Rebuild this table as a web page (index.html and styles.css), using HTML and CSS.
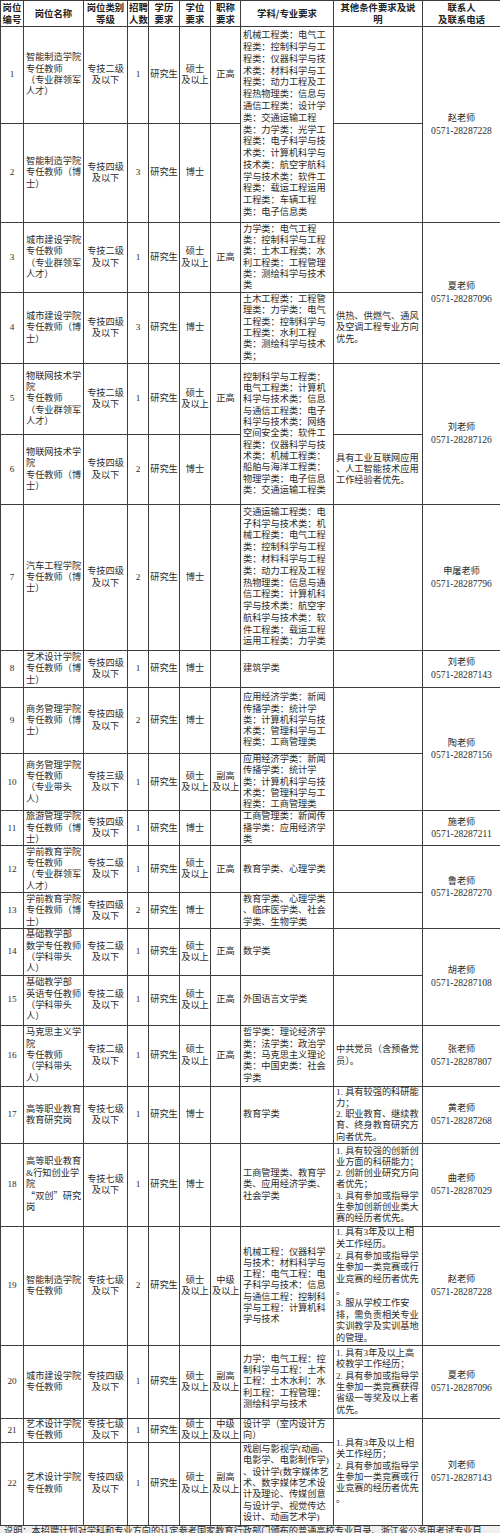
FILE: index.html
```html
<!DOCTYPE html>
<html lang="zh-CN">
<head>
<meta charset="utf-8">
<title>招聘计划</title>
<link rel="stylesheet" href="styles.css">
</head>
<body>
<table class="plan">
<colgroup>
<col class="w-no"><col class="w-name"><col class="w-type"><col class="w-cnt"><col class="w-edu"><col class="w-deg"><col class="w-title"><col class="w-subj"><col class="w-other"><col class="w-contact">
</colgroup>
<thead>
<tr class="rh">
<th>岗位<br>编号</th><th>岗位名称</th><th>岗位类别<br>等级</th><th>招聘<br>人数</th><th>学历<br>要求</th><th>学位<br>要求</th><th>职称<br>要求</th><th>学科/专业要求</th><th>其他条件要求及说<br>明</th><th>联系人<br>及联系电话</th>
</tr>
</thead>
<tbody>
<tr class="r1">
<td class="c">1</td><td class="l">智能制造学院<br>专任教师<br>（专业群领军<br>人才）</td><td class="c">专技二级<br>及以下</td><td class="c">1</td><td class="c">研究生</td><td class="c">硕士<br>及以上</td><td class="c">正高</td>
<td class="l tall" rowspan="2">机械工程类：电气工<br>程类：控制科学与工<br>程类：仪器科学与技<br>术类：材料科学与工<br>程类：动力工程及工<br>程热物理类：信息与<br>通信工程类：设计学<br>类：交通运输工程<br>类：力学类：光学工<br>程类：电子科学与技<br>术类：计算机科学与<br>技术类：航空宇航科<br>学与技术类：软件工<br>程类：载运工程运用<br>工程类：车辆工程<br>类：电子信息类</td>
<td class="l"></td>
<td class="c contact" rowspan="2">赵老师<br><span class="tel">0571-28287228</span></td>
</tr>
<tr class="r2">
<td class="c">2</td><td class="l">智能制造学院<br>专任教师（博<br>士）</td><td class="c">专技四级<br>及以下</td><td class="c">3</td><td class="c">研究生</td><td class="c">博士</td><td class="c"></td>
<td class="l"></td>
</tr>
<tr class="r3">
<td class="c">3</td><td class="l">城市建设学院<br>专任教师<br>（专业群领军<br>人才）</td><td class="c">专技二级<br>及以下</td><td class="c">1</td><td class="c">研究生</td><td class="c">硕士<br>及以上</td><td class="c">正高</td>
<td class="l">力学类：电气工程<br>类：控制科学与工程<br>类：土木工程类：水<br>利工程类：工程管理<br>类：测绘科学与技术<br>类</td>
<td class="l"></td>
<td class="c contact" rowspan="2">夏老师<br><span class="tel">0571-28287096</span></td>
</tr>
<tr class="r4">
<td class="c">4</td><td class="l">城市建设学院<br>专任教师（博<br>士）</td><td class="c">专技四级<br>及以下</td><td class="c">3</td><td class="c">研究生</td><td class="c">博士</td><td class="c"></td>
<td class="l">土木工程类：工程管<br>理类：力学类：电气<br>工程类：控制科学与<br>工程类：水利工程<br>类：测绘科学与技术<br>类；</td>
<td class="l">供热、供燃气、通风<br>及空调工程专业方向<br>优先。</td>
</tr>
<tr class="r5">
<td class="c">5</td><td class="l">物联网技术学<br>院<br>专任教师<br>（专业群领军<br>人才）</td><td class="c">专技二级<br>及以下</td><td class="c">1</td><td class="c">研究生</td><td class="c">硕士<br>及以上</td><td class="c">正高</td>
<td class="l" rowspan="2">控制科学与工程类：<br>电气工程类：计算机<br>科学与技术类：信息<br>与通信工程类：电子<br>科学与技术类：网络<br>空间安全类：软件工<br>程类：仪器科学与技<br>术类：机械工程类：<br>船舶与海洋工程类：<br>物理学类：电子信息<br>类：交通运输工程类</td>
<td class="l"></td>
<td class="c contact" rowspan="2">刘老师<br><span class="tel">0571-28287126</span></td>
</tr>
<tr class="r6">
<td class="c">6</td><td class="l">物联网技术学<br>院<br>专任教师（博<br>士）</td><td class="c">专技四级<br>及以下</td><td class="c">2</td><td class="c">研究生</td><td class="c">博士</td><td class="c"></td>
<td class="l">具有工业互联网应用<br>、人工智能技术应用<br>工作经验者优先。</td>
</tr>
<tr class="r7">
<td class="c">7</td><td class="l">汽车工程学院<br>专任教师（博<br>士）</td><td class="c">专技四级<br>及以下</td><td class="c">2</td><td class="c">研究生</td><td class="c">博士</td><td class="c"></td>
<td class="l tall">交通运输工程类：电<br>子科学与技术类：机<br>械工程类：电气工程<br>类：控制科学与工程<br>类：材料科学与工程<br>类：动力工程及工程<br>热物理类：信息与通<br>信工程类：计算机科<br>学与技术类：航空宇<br>航科学与技术类：软<br>件工程类：载运工程<br>运用工程类：力学类</td>
<td class="l"></td>
<td class="c contact">申屠老师<br><span class="tel">0571-28287796</span></td>
</tr>
<tr class="r8">
<td class="c">8</td><td class="l">艺术设计学院<br>专任教师（博<br>士）</td><td class="c">专技四级<br>及以下</td><td class="c">1</td><td class="c">研究生</td><td class="c">博士</td><td class="c"></td>
<td class="l">建筑学类</td>
<td class="l"></td>
<td class="c contact">刘老师<br><span class="tel">0571-28287143</span></td>
</tr>
<tr class="r9">
<td class="c">9</td><td class="l">商务管理学院<br>专任教师（博<br>士）</td><td class="c">专技四级<br>及以下</td><td class="c">2</td><td class="c">研究生</td><td class="c">博士</td><td class="c"></td>
<td class="l">应用经济学类：新闻<br>传播学类：统计学<br>类：计算机科学与技<br>术类：管理科学与工<br>程类：工商管理类</td>
<td class="l"></td>
<td class="c contact" rowspan="2">陶老师<br><span class="tel">0571-28287156</span></td>
</tr>
<tr class="r10">
<td class="c">10</td><td class="l">商务管理学院<br>专任教师<br>（专业带头<br>人）</td><td class="c">专技三级<br>及以下</td><td class="c">1</td><td class="c">研究生</td><td class="c">硕士<br>及以上</td><td class="c">副高<br>及以上</td>
<td class="l">应用经济学类：新闻<br>传播学类：统计学<br>类：计算机科学与技<br>术类：管理科学与工<br>程类：工商管理类</td>
<td class="l"></td>
</tr>
<tr class="r11">
<td class="c">11</td><td class="l">旅游管理学院<br>专任教师（博<br>士）</td><td class="c">专技四级<br>及以下</td><td class="c">1</td><td class="c">研究生</td><td class="c">博士</td><td class="c"></td>
<td class="l">工商管理类：新闻传<br>播学类：应用经济学<br>类</td>
<td class="l"></td>
<td class="c contact">施老师<br><span class="tel">0571-28287211</span></td>
</tr>
<tr class="r12">
<td class="c">12</td><td class="l">学前教育学院<br>专任教师<br>（专业群领军<br>人才）</td><td class="c">专技二级<br>及以下</td><td class="c">1</td><td class="c">研究生</td><td class="c">硕士<br>及以上</td><td class="c">正高</td>
<td class="l">教育学类、心理学类</td>
<td class="l"></td>
<td class="c contact" rowspan="2">鲁老师<br><span class="tel">0571-28287270</span></td>
</tr>
<tr class="r13">
<td class="c">13</td><td class="l">学前教育学院<br>专任教师（博<br>士）</td><td class="c">专技四级<br>及以下</td><td class="c">2</td><td class="c">研究生</td><td class="c">博士</td><td class="c"></td>
<td class="l">教育学类、心理学类<br>、临床医学类、社会<br>学类、生物学类</td>
<td class="l"></td>
</tr>
<tr class="r14">
<td class="c">14</td><td class="l">基础教学部<br>数学专任教师<br>（学科带头<br>人）</td><td class="c">专技二级<br>及以下</td><td class="c">1</td><td class="c">研究生</td><td class="c">硕士<br>及以上</td><td class="c">正高</td>
<td class="l">数学类</td>
<td class="l"></td>
<td class="c contact" rowspan="2">胡老师<br><span class="tel">0571-28287108</span></td>
</tr>
<tr class="r15">
<td class="c">15</td><td class="l">基础教学部<br>英语专任教师<br>（学科带头<br>人）</td><td class="c">专技二级<br>及以下</td><td class="c">1</td><td class="c">研究生</td><td class="c">硕士<br>及以上</td><td class="c">正高</td>
<td class="l">外国语言文学类</td>
<td class="l"></td>
</tr>
<tr class="r16">
<td class="c">16</td><td class="l">马克思主义学<br>院<br>专任教师<br>（学科带头<br>人）</td><td class="c">专技二级<br>及以下</td><td class="c">1</td><td class="c">研究生</td><td class="c">硕士<br>及以上</td><td class="c">正高</td>
<td class="l">哲学类：理论经济学<br>类：法学类：政治学<br>类：马克思主义理论<br>类：中国史类：社会<br>学类</td>
<td class="l">中共党员（含预备党<br>员）。</td>
<td class="c contact">张老师<br><span class="tel">0571-28287807</span></td>
</tr>
<tr class="r17">
<td class="c">17</td><td class="l">高等职业教育<br>教育研究岗</td><td class="c">专技七级<br>及以下</td><td class="c">1</td><td class="c">研究生</td><td class="c">博士</td><td class="c"></td>
<td class="l">教育学类</td>
<td class="l">1. 具有较强的科研能<br>力；<br>2. 职业教育、继续教<br>育、终身教育研究方<br>向者优先。</td>
<td class="c contact">黄老师<br><span class="tel">0571-28287268</span></td>
</tr>
<tr class="r18">
<td class="c">18</td><td class="l">高等职业教育<br>&amp;行知创业学<br>院<br><span class="cjk">“双创”</span>研究<br>岗</td><td class="c">专技七级<br>及以下</td><td class="c">1</td><td class="c">研究生</td><td class="c">博士</td><td class="c"></td>
<td class="l">工商管理类、教育学<br>类、应用经济学类、<br>社会学类</td>
<td class="l">1. 具有较强的创新创<br>业方面的科研能力；<br>2. 创新创业研究方向<br>者优先；<br>3. 具有参加或指导学<br>生参加创新创业类大<br>赛的经历者优先。</td>
<td class="c contact">曲老师<br><span class="tel">0571-28287029</span></td>
</tr>
<tr class="r19">
<td class="c">19</td><td class="l">智能制造学院<br>专任教师</td><td class="c">专技七级<br>及以下</td><td class="c">2</td><td class="c">研究生</td><td class="c">硕士<br>及以上</td><td class="c">中级<br>及以上</td>
<td class="l">机械工程：仪器科学<br>与技术：材料科学与<br>工程：电气工程：电<br>子科学与技术：信息<br>与通信工程：控制科<br>学与工程：计算机科<br>学与技术</td>
<td class="l tall">1. 具有3年及以上相<br>关工作经历。<br>2. 具有参加或指导学<br>生参加一类竞赛或行<br>业竞赛的经历者优先<br>。<br>3. 服从学校工作安<br>排，需负责相关专业<br>实训教学及实训基地<br>的管理。</td>
<td class="c contact">赵老师<br><span class="tel">0571-28287228</span></td>
</tr>
<tr class="r20">
<td class="c">20</td><td class="l">城市建设学院<br>专任教师</td><td class="c">专技四级<br>及以下</td><td class="c">1</td><td class="c">研究生</td><td class="c">硕士<br>及以上</td><td class="c">副高<br>及以上</td>
<td class="l">力学：电气工程：控<br>制科学与工程：土木<br>工程：土木水利：水<br>利工程：工程管理：<br>测绘科学与技术</td>
<td class="l">1. 具有3年及以上高<br>校教学工作经历；<br>2. 具有参加或指导学<br>生参加一类竞赛获得<br>省级一等奖及以上者<br>优先。</td>
<td class="c contact">夏老师<br><span class="tel">0571-28287096</span></td>
</tr>
<tr class="r21">
<td class="c">21</td><td class="l">艺术设计学院<br>专任教师</td><td class="c">专技七级<br>及以下</td><td class="c">1</td><td class="c">研究生</td><td class="c">硕士<br>及以上</td><td class="c">中级<br>及以上</td>
<td class="l">设计学（室内设计方<br>向）</td>
<td class="l" rowspan="2">1. 具有3年及以上相<br>关工作经历；<br>2. 具有参加或指导学<br>生参加一类竞赛或行<br>业竞赛的经历者优先<br>。</td>
<td class="c contact" rowspan="2">刘老师<br><span class="tel">0571-28287143</span></td>
</tr>
<tr class="r22">
<td class="c">22</td><td class="l">艺术设计学院<br>专任教师</td><td class="c">专技四级<br>及以下</td><td class="c">1</td><td class="c">研究生</td><td class="c">硕士<br>及以上</td><td class="c">副高<br>及以上</td>
<td class="l">戏剧与影视学(动画、<br>电影学、电影制作学)<br>、设计学(数字媒体艺<br>术、数字媒体艺术设<br>计及理论、传媒创意<br>与设计学、视觉传达<br>设计、动画艺术学)</td>
</tr>
</tbody>
</table>
<p class="note">说明：本招聘计划对学科和专业方向的认定参考国家教育行政部门颁布的普通高校专业目录、浙江省公务用考试专业目</p>
</body>
</html>
```

FILE: styles.css
```css
html, body {
  margin: 0;
  padding: 0;
  background: #ffffff;
}
body {
  font-family: "Liberation Serif", "Noto Sans CJK SC", serif;
  font-size: 9.2px;
  color: #2b2b2b;
  width: 500px;
  overflow: hidden;
}
.plan {
  border-collapse: collapse;
  table-layout: fixed;
  width: 500px;
}
.w-no { width: 23px; }
.w-name { width: 60px; }
.w-type { width: 44px; }
.w-cnt { width: 21px; }
.w-edu { width: 31px; }
.w-deg { width: 31px; }
.w-title { width: 30px; }
.w-subj { width: 93px; }
.w-other { width: 89px; }
.w-contact { width: 78px; }

.plan th,
.plan td {
  border: 1px solid #3c3c3c;
  padding: 0 1px;
  vertical-align: middle;
  line-height: 11.3px;
  white-space: nowrap;
  overflow: hidden;
}
.plan th {
  font-family: "Noto Sans CJK SC", sans-serif;
  font-weight: 700;
  font-size: 9.4px;
  line-height: 11.6px;
  text-align: center;
  color: #222;
}
.plan td.c { text-align: center; }
.plan td.l { text-align: left; padding-left: 2px; }
.plan td.tall { line-height: 11.8px; }
.plan td.contact { line-height: 12.7px; }
.tel { font-size: 9.6px; }
.cjk { font-family: "Noto Sans CJK SC", sans-serif; }

.rh { height: 26px; }
.r1 { height: 97px; }
.r2 { height: 99px; }
.r3 { height: 70px; }
.r4 { height: 71px; }
.r5 { height: 71px; }
.r6 { height: 70px; }
.r7 { height: 146px; }
.r8 { height: 37px; }
.r9 { height: 66px; }
.r10 { height: 56px; }
.r11 { height: 34px; }
.r12 { height: 47px; }
.r13 { height: 36px; }
.r14 { height: 46px; }
.r15 { height: 50px; }
.r16 { height: 61px; }
.r17 { height: 57px; }
.r18 { height: 83px; }
.r19 { height: 119px; }
.r20 { height: 73px; }
.r21 { height: 23px; }
.r22 { height: 83px; }

.note {
  margin: 0;
  padding: 0 0 0 4px;
  background: #efefef;
  line-height: 11px;
  white-space: nowrap;
  overflow: hidden;
}
```
